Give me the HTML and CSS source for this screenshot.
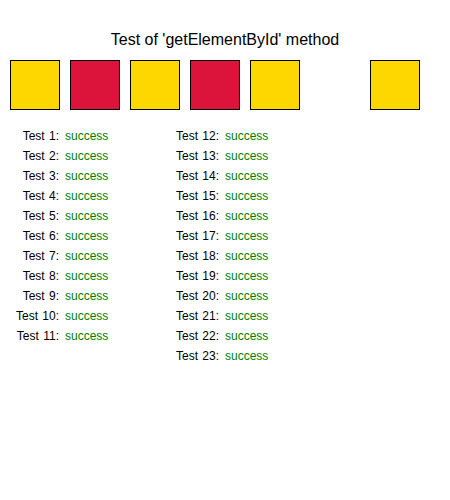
FILE: index.html
```html
<!DOCTYPE html>
<html>
<head>
<meta charset="utf-8">
<link rel="stylesheet" href="styles.css">
</head>
<body>
<h1 class="title">Test of 'getElementById' method</h1>
<div class="boxes">
  <div class="box gold"></div>
  <div class="box red"></div>
  <div class="box gold"></div>
  <div class="box red"></div>
  <div class="box gold"></div>
  <div class="box hidden"></div>
  <div class="box gold"></div>
</div>
<div class="results">
  <div class="col">
    <div class="row"><span class="label">Test 1:</span><span class="ok">success</span></div>
    <div class="row"><span class="label">Test 2:</span><span class="ok">success</span></div>
    <div class="row"><span class="label">Test 3:</span><span class="ok">success</span></div>
    <div class="row"><span class="label">Test 4:</span><span class="ok">success</span></div>
    <div class="row"><span class="label">Test 5:</span><span class="ok">success</span></div>
    <div class="row"><span class="label">Test 6:</span><span class="ok">success</span></div>
    <div class="row"><span class="label">Test 7:</span><span class="ok">success</span></div>
    <div class="row"><span class="label">Test 8:</span><span class="ok">success</span></div>
    <div class="row"><span class="label">Test 9:</span><span class="ok">success</span></div>
    <div class="row"><span class="label">Test 10:</span><span class="ok">success</span></div>
    <div class="row"><span class="label">Test 11:</span><span class="ok">success</span></div>
  </div>
  <div class="col">
    <div class="row"><span class="label">Test 12:</span><span class="ok">success</span></div>
    <div class="row"><span class="label">Test 13:</span><span class="ok">success</span></div>
    <div class="row"><span class="label">Test 14:</span><span class="ok">success</span></div>
    <div class="row"><span class="label">Test 15:</span><span class="ok">success</span></div>
    <div class="row"><span class="label">Test 16:</span><span class="ok">success</span></div>
    <div class="row"><span class="label">Test 17:</span><span class="ok">success</span></div>
    <div class="row"><span class="label">Test 18:</span><span class="ok">success</span></div>
    <div class="row"><span class="label">Test 19:</span><span class="ok">success</span></div>
    <div class="row"><span class="label">Test 20:</span><span class="ok">success</span></div>
    <div class="row"><span class="label">Test 21:</span><span class="ok">success</span></div>
    <div class="row"><span class="label">Test 22:</span><span class="ok">success</span></div>
    <div class="row"><span class="label">Test 23:</span><span class="ok">success</span></div>
  </div>
</div>
</body>
</html>
```
FILE: styles.css
```css
html, body {
  margin: 0;
  padding: 0;
  background: #fff;
}
body {
  font-family: "Liberation Sans", Arial, sans-serif;
  color: #000;
  width: 450px;
}
.title {
  margin: 0;
  padding-top: 30px;
  height: 20px;
  line-height: 20px;
  font-size: 16px;
  font-weight: normal;
  text-align: center;
}
.boxes {
  display: flex;
  gap: 10px;
  padding-left: 10px;
  margin-top: 10px;
}
.box {
  width: 50px;
  height: 50px;
  box-sizing: border-box;
  border: 1px solid #000;
}
.gold { background: #ffd700; }
.red { background: #dc143c; }
.hidden { visibility: hidden; }
.results {
  display: flex;
  margin-top: 16px;
  font-size: 12px;
}
.col {
  width: 160px;
}
.row {
  display: flex;
  height: 20px;
  line-height: 20px;
}
.label {
  width: 59px;
  text-align: right;
  margin-right: 6px;
  white-space: nowrap;
  word-spacing: 1px;
}
.ok {
  color: #008000;
}
```
